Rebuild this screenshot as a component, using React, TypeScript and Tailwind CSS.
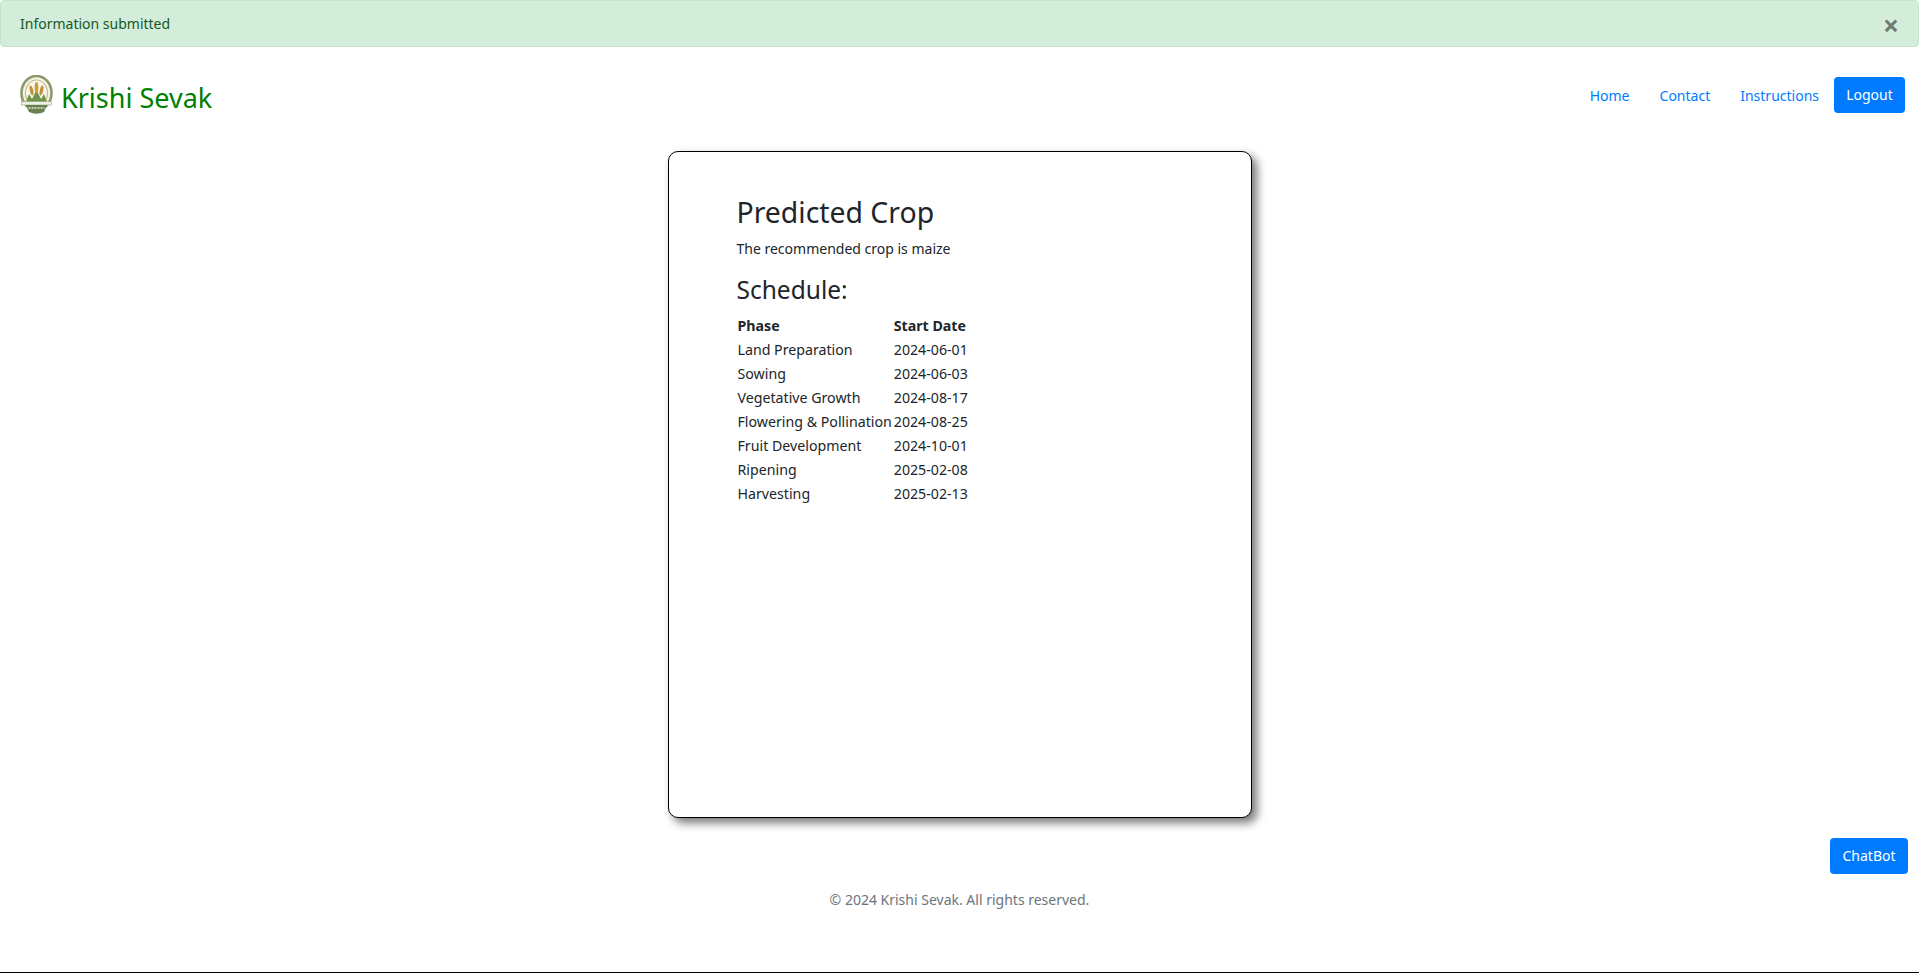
import React from 'react';

const rows = [
  ['Land Preparation', '2024-06-01'],
  ['Sowing', '2024-06-03'],
  ['Vegetative Growth', '2024-08-17'],
  ['Flowering & Pollination', '2024-08-25'],
  ['Fruit Development', '2024-10-01'],
  ['Ripening', '2025-02-08'],
  ['Harvesting', '2025-02-13'],
];

const Logo: React.FC = () => (
  <svg width="33" height="40" viewBox="0 0 33 40" className="shrink-0">
    <ellipse cx="16.5" cy="18" rx="15" ry="17" fill="#f6f3e4" stroke="#8b9a6b" strokeWidth="2.6" />
    <ellipse cx="16.5" cy="18" rx="11" ry="13" fill="#fbf9ee" stroke="#c7b98f" strokeWidth="1.2" />
    <path d="M6 27 L9 19 L12 24 L16.5 15 L21 24 L24 19 L27 27 Z" fill="#6d9447" />
    <ellipse cx="11.5" cy="15.5" rx="1.7" ry="5" fill="#c4913a" transform="rotate(-14 11.5 15.5)" />
    <ellipse cx="16.5" cy="12.5" rx="1.9" ry="5.5" fill="#cf9a3c" />
    <ellipse cx="21.5" cy="15.5" rx="1.7" ry="5" fill="#c4913a" transform="rotate(14 21.5 15.5)" />
    <rect x="1.5" y="26.5" width="30" height="3.5" fill="#edf0e4" stroke="#8b9a6b" strokeWidth="0.5" />
    <path d="M6 30 H27 L24 37 Q16.5 40.5 9 37 Z" fill="#66804f" />
    <path d="M8.5 33 H24.5" stroke="#e8ecdc" strokeWidth="1.6" strokeDasharray="2 1" />
  </svg>
);

export default function App() {
  return (
    <div className="relative flex flex-col h-[973px] overflow-hidden bg-white border-b border-black text-[14px] leading-[22px] text-[#212529] font-['Noto_Sans','Open_Sans',sans-serif]">
      <div className="relative flex h-[47px] shrink-0 items-center rounded-[4px] border border-[#c3e6cb] bg-[#d4edda] px-[19px] text-[#155724]">
        Information submitted
        <span className="absolute right-[19px] top-[10px] text-[28px] font-bold leading-none text-[#6f7b72]">×</span>
      </div>

      <nav className="flex h-[96px] shrink-0 items-center justify-between pl-[20px] pr-[14px]">
        <a className="flex items-center gap-[8px] text-[27px] leading-[40px] text-[#008000]">
          <Logo />
          <span className="pt-[6px]">Krishi Sevak</span>
        </a>
        <div className="flex items-center">
          <a className="px-[15px] pt-[1px] text-[#007bff]">Home</a>
          <a className="px-[15px] pt-[1px] text-[#007bff]">Contact</a>
          <a className="pl-[15px] pr-[15px] pt-[1px] text-[#007bff]">Instructions</a>
          <button className="h-[36px] w-[71px] rounded-[4px] bg-[#007bff] text-white">Logout</button>
        </div>
      </nav>

      <main className="flex justify-center pt-[8px]">
        <div className="h-[667px] w-[584px] rounded-[10px] border border-black bg-white pl-[68px] pt-[43px] shadow-[5px_5px_10px_#777]">
          <h2 className="text-[28.4px] leading-[35px] mb-[8px]">Predicted Crop</h2>
          <p className="mb-[15px]">The recommended crop is maize</p>
          <h3 className="text-[24.5px] leading-[30px] mb-[9px]">Schedule:</h3>
          <table className="border-separate border-spacing-0 text-[14.2px]">
            <thead>
              <tr>
                <th className="w-[156px] p-px text-left font-bold">Phase</th>
                <th className="p-px text-left font-bold">Start Date</th>
              </tr>
            </thead>
            <tbody>
              {rows.map(([phase, date]) => (
                <tr key={phase}>
                  <td className="p-px whitespace-nowrap">{phase}</td>
                  <td className="p-px">{date}</td>
                </tr>
              ))}
            </tbody>
          </table>
        </div>
      </main>

      <footer className="pt-[71px] text-center text-[#6c757d]">© 2024 Krishi Sevak. All rights reserved.</footer>

      <button className="absolute right-[11px] top-[838px] h-[36px] w-[78px] rounded-[4px] bg-[#007bff] text-white">ChatBot</button>
    </div>
  );
}
